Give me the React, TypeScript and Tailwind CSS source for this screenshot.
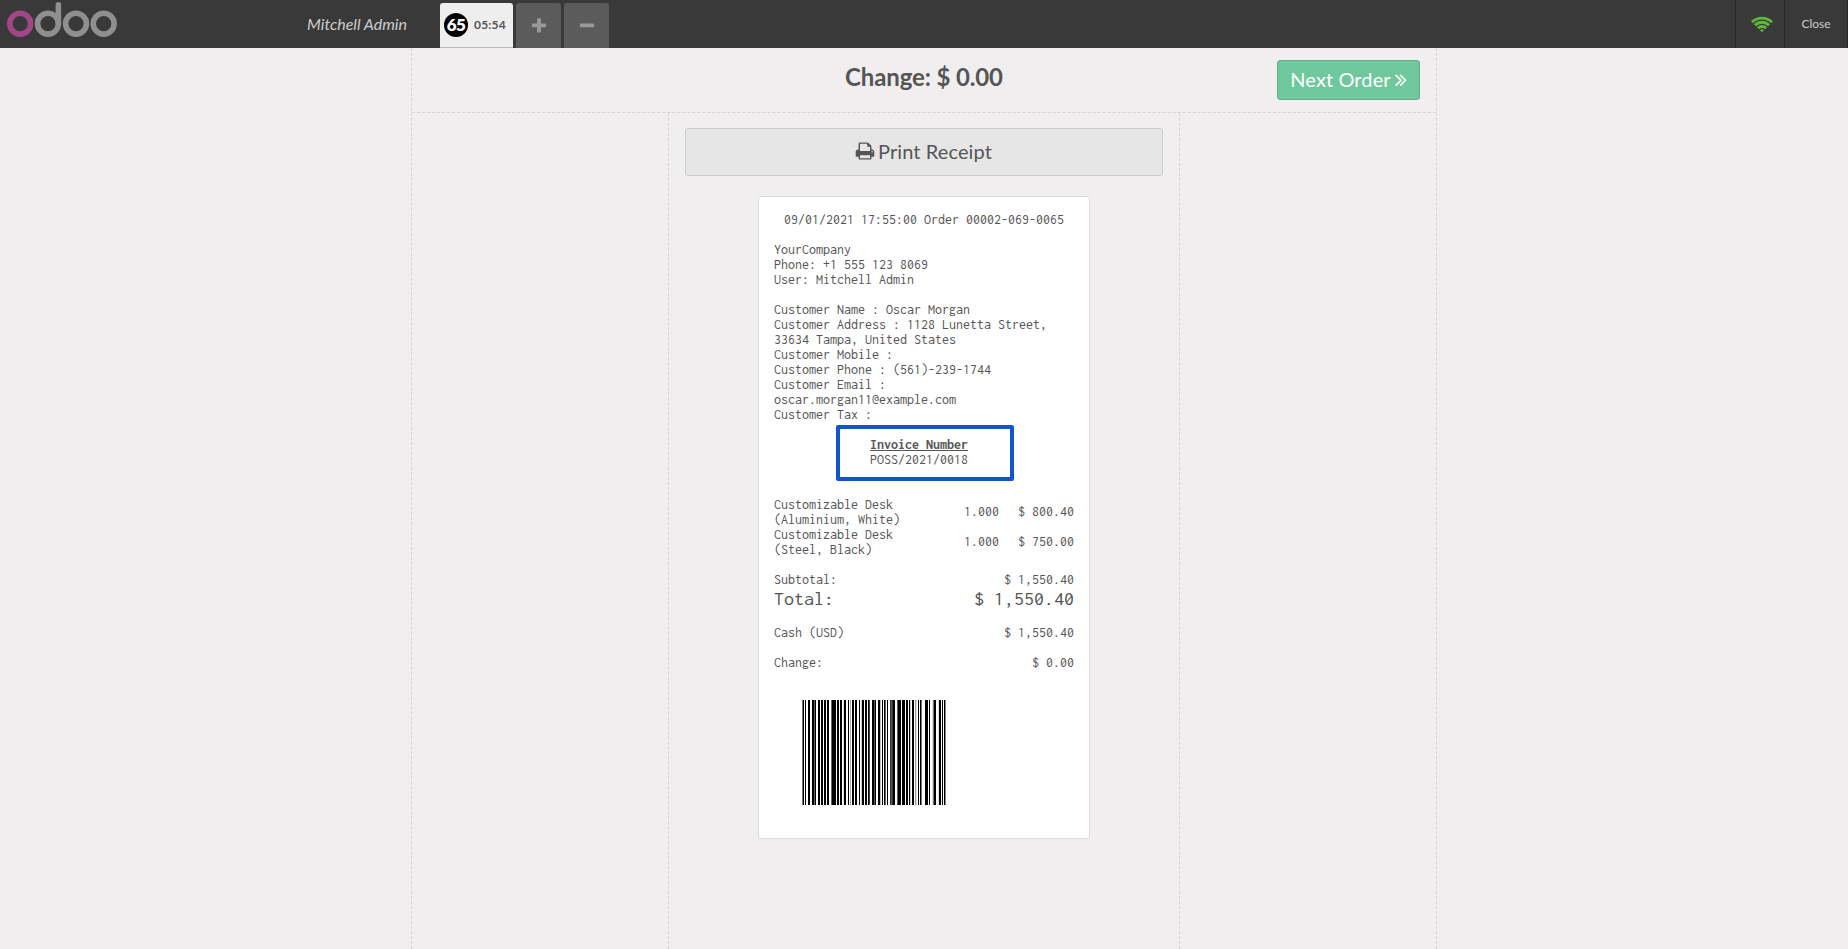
import React from "react";

const PATHS = {
  plus: "M1600 736v192q0 40-28 68t-68 28h-416v416q0 40-28 68t-68 28h-192q-40 0-68-28t-28-68v-416h-416q-40 0-68-28t-28-68v-192q0-40 28-68t68-28h416v-416q0-40 28-68t68-28h192q40 0 68 28t28 68v416h416q40 0 68 28t28 68z",
  minus: "M1600 736v192q0 40-28 68t-68 28h-1216q-40 0-68-28t-28-68v-192q0-40 28-68t68-28h1216q40 0 68 28t28 68z",
  print: "M448 1536h896v-256h-896v256zm0-640h896v-384h-160q-40 0-68-28t-28-68v-160h-640v640zm1152 64q0-26-19-45t-45-19-45 19-19 45 19 45 45 19 45-19 19-45zm128 0v416q0 13-9.5 22.5t-22.5 9.5h-224v160q0 40-28 68t-68 28h-960q-40 0-68-28t-28-68v-160h-224q-13 0-22.5-9.5t-9.5-22.5v-416q0-79 56.5-135.5t135.5-56.5h64v-544q0-40 28-68t68-28h672q40 0 88 20t76 48l152 152q28 28 48 76t20 88v256h64q79 0 135.5 56.5t56.5 135.5z",
  next: "M979 960q0 13-10 23l-466 466q-10 10-23 10t-23-10l-50-50q-10-10-10-23t10-23l393-393-393-393q-10-10-10-23t10-23l50-50q10-10 23-10t23 10l466 466q10 10 10 23zm384 0q0 13-10 23l-466 466q-10 10-23 10t-23-10l-50-50q-10-10-10-23t10-23l393-393-393-393q-10-10-10-23t10-23l50-50q10-10 23-10t23 10l466 466q10 10 10 23z",
};

function Icon({ name, box = "0 0 1792 1792", className }: { name: keyof typeof PATHS; box?: string; className: string }) {
  return (
    <svg viewBox={box} className={className} fill="currentColor">
      <path d={PATHS[name]} />
    </svg>
  );
}

function Logo() {
  return (
    <svg className="ml-1.5 h-11 w-[114px]" viewBox="6 0 114 44" fill="none" strokeWidth="5.6">
      <circle cx="20.2" cy="23.7" r="10.4" stroke="#a24689" />
      <g stroke="#8f8f8f">
        <circle cx="48" cy="23.7" r="10.4" />
        <path d="M58.4 24V4.8" strokeLinecap="round" />
        <circle cx="76" cy="23.7" r="10.4" />
        <circle cx="103.7" cy="23.7" r="10.4" />
      </g>
    </svg>
  );
}

function Wifi() {
  return (
    <svg className="h-[18px] w-[22px]" viewBox="0 0 22 18" fill="none" stroke="#5eb937" strokeWidth="2.9">
      <path d="M.96 7.26A14.2 14.2 0 0 1 21.04 7.26" />
      <path d="M3.93 10.23A10 10 0 0 1 18.07 10.23" />
      <path d="M6.9 13.2A5.8 5.8 0 0 1 15.1 13.2" />
      <path d="M8.95 15.25A2.9 2.9 0 0 1 13.05 15.25L11 17.3Z" fill="#5eb937" stroke="none" />
    </svg>
  );
}

// [x, width, fill] of each bar
const BARS: [number, number, string?][] = [
  [0, 1, "#777"], [1, 1], [3, 1], [6, 2], [10, 2], [12, 1, "#666"], [13, 1], [16, 2], [19, 2], [22, 2], [25, 2],
  [29, 1, "#666"], [30, 4], [35, 2], [38, 2], [41, 1, "#ddd"], [42, 2], [46, 1], [48, 1, "#aaa"], [50, 2], [53, 2],
  [57, 1], [59, 1, "#ccc"], [60, 2], [63, 2], [66, 1], [67, 1, "#444"], [70, 2], [72, 1, "#555"], [73, 1], [76, 2],
  [78, 1, "#bbb"], [80, 1], [82, 1], [83, 1, "#666"], [85, 1], [88, 1, "#333"], [89, 1, "#555"], [90, 1, "#333"],
  [91, 2], [95, 1, "#555"], [96, 3], [100, 3], [104, 2], [107, 1], [108, 1, "#ccc"], [110, 2], [113, 1, "#999"],
  [114, 1, "#ddd"], [116, 1], [118, 1], [119, 1, "#777"], [123, 3], [127, 1], [130, 1, "#ddd"], [131, 1, "#777"],
  [132, 2], [136, 1, "#ddd"], [137, 2], [140, 1], [142, 1], [143, 1, "#888"],
];

function Barcode() {
  return (
    <svg className="mt-[30px] ml-7 h-[105px] w-36" viewBox="0 0 144 105" shapeRendering="crispEdges">
      {BARS.map(([x, w, fill = "#000"]) => (
        <rect key={x} x={x} y="0" width={w} height="105" fill={fill} />
      ))}
    </svg>
  );
}

function Row({ label, value, big }: { label: string; value: string; big?: boolean }) {
  return (
    <div className={big ? "flex h-[23px] justify-between text-[20px] leading-[23px]" : "flex justify-between"}>
      <span>{label}</span>
      <span>{value}</span>
    </div>
  );
}

function Item({ name, variant, price }: { name: string; variant: string; price: string }) {
  return (
    <div className="flex items-center">
      <div className="w-[190px]">
        <div>{name}</div>
        <div>{variant}</div>
      </div>
      <div className="flex-1 pb-px">1.000</div>
      <div className="pb-px">{price}</div>
    </div>
  );
}

const CUSTOMER = [
  "Customer Name : Oscar Morgan",
  "Customer Address : 1128 Lunetta Street,",
  "33634 Tampa, United States",
  "Customer Mobile :",
  "Customer Phone : (561)-239-1744",
  "Customer Email :",
  "oscar.morgan11@example.com",
  "Customer Tax :",
];

function Receipt() {
  return (
    <div className="relative mx-auto mt-5 h-[643px] w-[332px] rounded-[3px] border border-[#dcdcdc] bg-white px-[15px] pt-[15px] font-['Inconsolata','DejaVu_Sans_Mono',monospace] text-[14px] leading-[15px] whitespace-pre text-[#555]">
      <div className="text-center">09/01/2021 17:55:00 Order 00002-069-0065</div>
      <div className="mt-[15px]">YourCompany</div>
      <div>Phone: +1 555 123 8069</div>
      <div className="mb-[15px]">User: Mitchell Admin</div>
      {CUSTOMER.map((line) => (
        <div key={line}>{line}</div>
      ))}
      <div className="mt-[15px] ml-24 font-bold underline">Invoice Number</div>
      <div className="mb-[30px] ml-24">POSS/2021/0018</div>
      <Item name="Customizable Desk" variant="(Aluminium, White)" price="$ 800.40" />
      <Item name="Customizable Desk" variant="(Steel, Black)" price="$ 750.00" />
      <div className="mt-[15px]">
        <Row label="Subtotal:" value="$ 1,550.40" />
        <Row label="Total:" value="$ 1,550.40" big />
      </div>
      <div className="mt-[15px]">
        <Row label="Cash (USD)" value="$ 1,550.40" />
      </div>
      <div className="mt-[15px]">
        <Row label="Change:" value="$ 0.00" />
      </div>
      <Barcode />
      <div className="absolute top-[228px] left-[77px] h-14 w-[178px] rounded-[2px] border-4 border-[#1155cc]" />
    </div>
  );
}

export default function App() {
  return (
    <div className="flex h-[949px] w-[1848px] flex-col overflow-hidden bg-[#f0eeee] font-['Lato',sans-serif] text-[#555]">
      <header className="flex h-12 shrink-0 bg-[#393939]">
        <div className="flex w-[440px] justify-between">
          <Logo />
          <div className="mr-[33px] text-[16px] leading-[48px] text-[#ccc] italic">Mitchell Admin</div>
        </div>
        <div className="flex gap-[3px] pt-[3px]">
          <div className="flex w-[73px] items-center rounded-t-[3px] border-b border-[#bbb] bg-[#eee] pl-1">
            <div className="flex size-6 items-center justify-center rounded-full bg-black text-[17px] font-extrabold tracking-[-0.5px] text-white">65</div>
            <div className="ml-1.5 pb-px text-[12px] font-bold tracking-[0.2px] text-[#555]">05:54</div>
          </div>
          <div className="flex w-[45px] items-center justify-center rounded-t-[3px] bg-[#5b5b5b] text-[#999]">
            <Icon name="plus" className="size-[18px]" />
          </div>
          <div className="flex w-[45px] items-center justify-center rounded-t-[3px] bg-[#5b5b5b] text-[#999]">
            <Icon name="minus" className="size-[18px]" />
          </div>
        </div>
        <div className="ml-auto flex">
          <div className="flex w-[49px] items-center justify-center border-l border-[#292929] pl-1">
            <Wifi />
          </div>
          <div className="w-16 border-x border-[#292929] text-center text-[12px] leading-[47px] text-[#ccc]">Close</div>
        </div>
      </header>
      <main className="mx-auto flex w-[1026px] flex-1 flex-col border-x border-dashed border-[#d6d4d4]">
        <div className="relative flex h-[65px] shrink-0 justify-center border-b border-dashed border-[#d6d4d4]">
          <h1 className="pt-[14px] text-[24px] leading-[30px] font-bold tracking-[-0.13px]">Change: $ 0.00</h1>
          <button className="absolute top-3 right-4 flex h-10 w-[143px] items-center justify-center rounded-[3px] border border-[#64af8a] bg-[#6ec89b] pb-0.5 text-[20px] tracking-[0.1px] text-white">
            Next Order
            <Icon name="next" box="384 0 1024 1792" className="ml-1 h-[21px] w-3" />
          </button>
        </div>
        <div className="mx-auto w-[512px] flex-1 border-x border-dashed border-[#d6d4d4] px-4 pt-[15px]">
          <button className="flex h-12 w-full items-center justify-center rounded-[3px] border border-[#ccc] bg-[#e6e6e6] pr-px pb-0.5 text-[20px] tracking-[0.1px]">
            <Icon name="print" className="mr-[3px] size-5" />
            Print Receipt
          </button>
          <Receipt />
        </div>
      </main>
    </div>
  );
}
